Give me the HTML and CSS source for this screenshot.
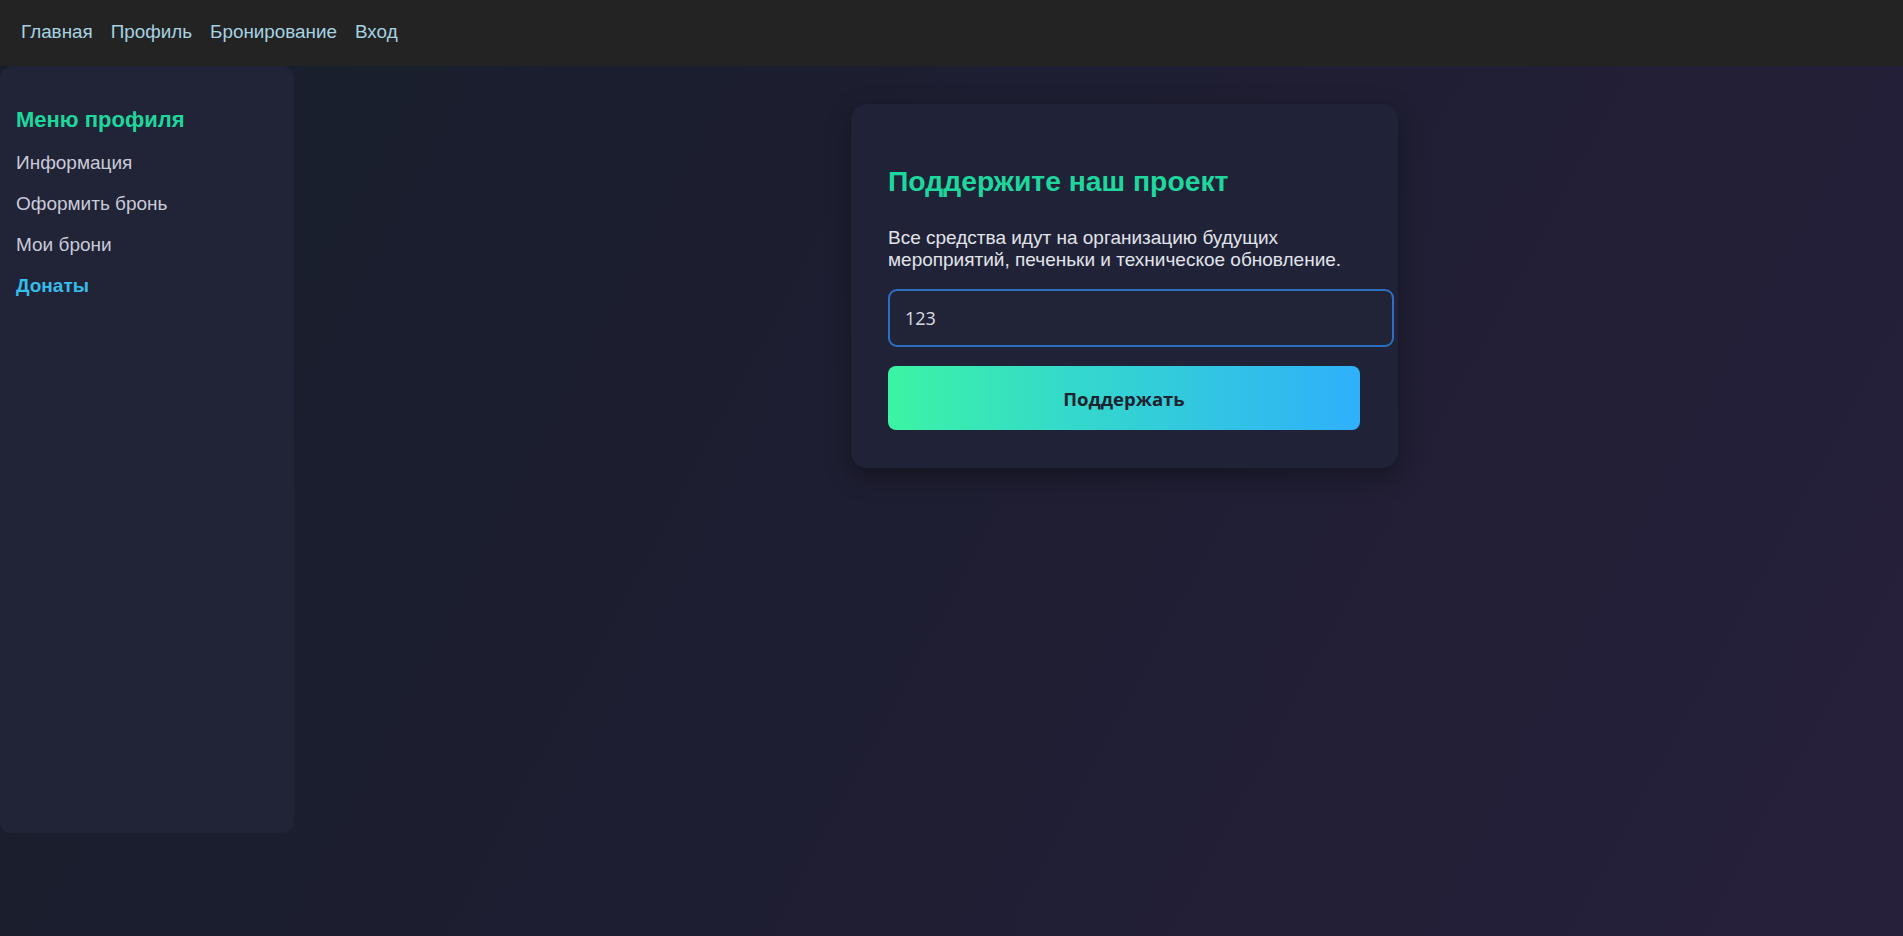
FILE: index.html
```html
<!DOCTYPE html>
<html lang="ru">
<head>
<meta charset="utf-8">
<title>Донаты</title>
<link rel="stylesheet" href="styles.css">
</head>
<body>
<header class="topbar">
  <nav class="topnav">
    <a href="#" class="topnav-link">Главная</a>
    <a href="#" class="topnav-link">Профиль</a>
    <a href="#" class="topnav-link">Бронирование</a>
    <a href="#" class="topnav-link">Вход</a>
  </nav>
</header>
<div class="layout">
  <aside class="sidebar">
    <h3 class="sidebar-title">Меню профиля</h3>
    <a href="#" class="sidebar-link">Информация</a>
    <a href="#" class="sidebar-link">Оформить бронь</a>
    <a href="#" class="sidebar-link">Мои брони</a>
    <a href="#" class="sidebar-link active">Донаты</a>
  </aside>
  <main class="content">
    <section class="card">
      <h2 class="card-title">Поддержите наш проект</h2>
      <p class="card-text">Все средства идут на организацию будущих мероприятий, печеньки и техническое обновление.</p>
      <input class="amount" type="text" value="123">
      <button class="donate-btn" type="button">Поддержать</button>
    </section>
  </main>
</div>
</body>
</html>
```
FILE: styles.css
```css
html, body {
  margin: 0;
  padding: 0;
}
body {
  min-height: 100vh;
  font-family: "Liberation Sans", Arial, sans-serif;
  background: linear-gradient(118deg, #171f2b 0%, #1e1e32 50%, #27203c 100%);
  color: #e2e4ec;
}
.topbar {
  height: 66px;
  box-sizing: border-box;
  background: #232323;
  display: flex;
  align-items: center;
  padding: 0 0 2px 21px;
}
.topnav {
  display: flex;
  gap: 18px;
}
.topnav-link {
  color: #a6d2e2;
  text-decoration: none;
  font-size: 18.85px;
}
.layout {
  display: flex;
  align-items: flex-start;
}
.sidebar {
  width: 294px;
  height: 767px;
  box-sizing: border-box;
  background: #212337;
  border-radius: 12px;
  padding: 41px 16px 0;
  display: flex;
  flex-direction: column;
}
.sidebar-title {
  margin: 0 0 9px;
  font-size: 22px;
  line-height: 26px;
  font-weight: bold;
  color: #1ed79d;
}
.sidebar-link {
  color: #c9cad8;
  text-decoration: none;
  font-size: 19px;
  line-height: 21px;
  padding: 10px 0;
}
.sidebar-link.active {
  color: #35bdec;
  font-weight: bold;
}
.content {
  flex: 1;
  display: flex;
  justify-content: center;
  padding: 38px 0 0 52px;
}
.card {
  width: 547px;
  box-sizing: border-box;
  background: #202338;
  border-radius: 16px;
  padding: 37px 38px 38px 37px;
  box-shadow: 0 8px 24px rgba(0, 0, 0, 0.35);
}
.card-title {
  margin: 24px 0 0;
  font-size: 28.3px;
  line-height: 32px;
  font-weight: bold;
  color: #1ed79d;
}
.card-text {
  margin: 30px 0 18px;
  font-size: 19px;
  line-height: 22px;
  color: #e2e3ea;
}
.amount {
  display: block;
  width: 100%;
  height: 54px;
  margin: 0;
  padding: 0 15px;
  border: 2px solid #2f6fc2;
  border-radius: 9px;
  background: #212436;
  color: #d9dce4;
  font-family: "Open Sans", sans-serif;
  font-size: 18px;
  outline: none;
}
.donate-btn {
  display: block;
  width: 100%;
  height: 64px;
  margin-top: 19px;
  border: none;
  border-radius: 8px;
  background: linear-gradient(90deg, #3bf4a4 0%, #34d8cc 40%, #2fb0fb 100%);
  color: #1d2230;
  font-family: "Open Sans", sans-serif;
  font-weight: bold;
  font-size: 18.5px;
  cursor: pointer;
}
```
